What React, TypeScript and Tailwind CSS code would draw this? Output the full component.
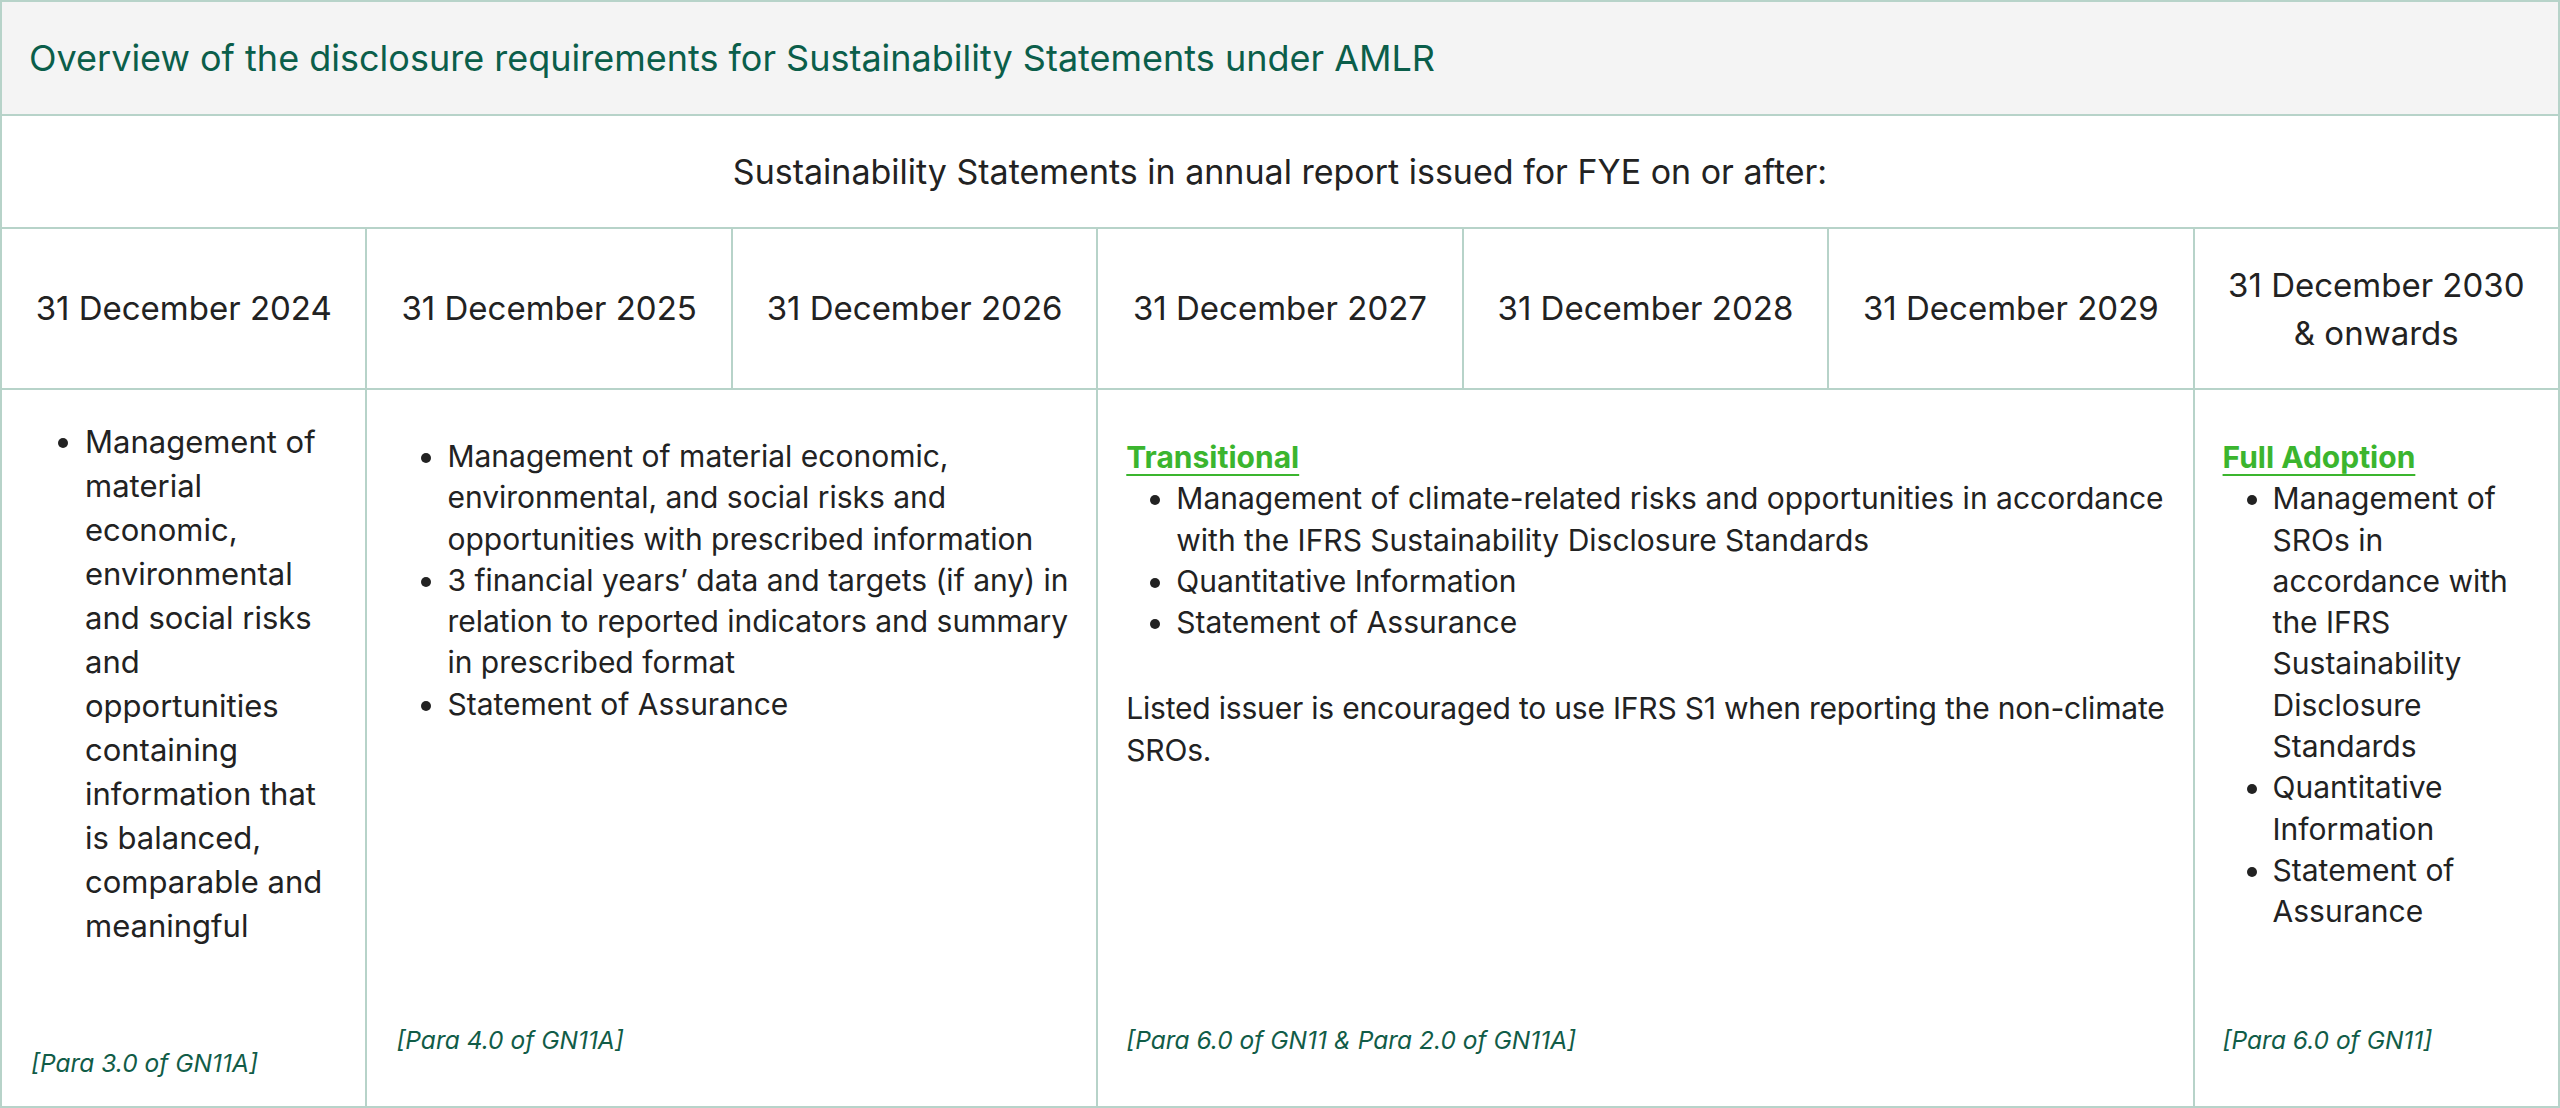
import React from "react";

const font = { fontFamily: "Inter, 'Noto Sans', sans-serif" };

function Bullets({ items, cls }: { items: string[]; cls: string }) {
  return (
    <ul className={`list-disc ${cls}`}>
      {items.map((t) => (
        <li key={t}>{t}</li>
      ))}
    </ul>
  );
}

const Ref = ({ children }: { children: React.ReactNode }) => (
  <div className="mt-auto text-[24.5px] italic text-[#115c47] leading-[32px]">{children}</div>
);

export default function App() {
  const dates = [
    "31 December 2024",
    "31 December 2025",
    "31 December 2026",
    "31 December 2027",
    "31 December 2028",
    "31 December 2029",
  ];
  return (
    <div className="w-[2560px] h-[1108px] bg-white text-[#222222]" style={font}>
      <div className="grid grid-cols-7 border-l-2 border-t-2 border-[#b7d3c9]">
        <div className="col-span-7 h-[114px] bg-[#f4f4f4] border-r-2 border-b-2 border-[#b7d3c9] flex items-center pl-[27px] text-[36px] text-[#0b5e4a]">
          Overview of the disclosure requirements for Sustainability Statements under AMLR
        </div>
        <div className="col-span-7 h-[113px] border-r-2 border-b-2 border-[#b7d3c9] flex items-center justify-center text-[34px]">
          Sustainability Statements in annual report issued for FYE on or after:
        </div>
        {dates.map((d) => (
          <div
            key={d}
            className="h-[161px] border-r-2 border-b-2 border-[#b7d3c9] flex items-center justify-center text-[33px]"
          >
            {d}
          </div>
        ))}
        <div className="h-[161px] border-r-2 border-b-2 border-[#b7d3c9] flex items-center justify-center text-center text-[33px] leading-[48px]">
          31 December 2030
          <br />& onwards
        </div>

        {/* body */}
        <div className="h-[718px] border-r-2 border-b-2 border-[#b7d3c9] flex flex-col pl-[29px] pr-[24px] pt-[30px] pb-[27px]">
          <Bullets
            cls="pl-[54px] text-[31px] leading-[44px]"
            items={[
              "Management of material economic, environmental and social risks and opportunities containing information that is balanced, comparable and meaningful",
            ]}
          />
          <Ref>[Para 3.0 of GN11A]</Ref>
        </div>
        <div className="col-span-2 h-[718px] border-r-2 border-b-2 border-[#b7d3c9] flex flex-col pl-[29px] pr-[24px] pt-[46px] pb-[50px]">
          <Bullets
            cls="pl-[51px] text-[30px] leading-[41.3px]"
            items={[
              "Management of material economic, environmental, and social risks and opportunities with prescribed information",
              "3 financial years’ data and targets (if any) in relation to reported indicators and summary in prescribed format",
              "Statement of Assurance",
            ]}
          />
          <Ref>[Para 4.0 of GN11A]</Ref>
        </div>
        <div className="col-span-3 h-[718px] border-r-2 border-b-2 border-[#b7d3c9] flex flex-col pl-[28px] pr-[10px] pt-[47px] pb-[50px] text-[30px] leading-[41.3px]">
          <div className="font-bold text-[#3bb52e] underline underline-offset-[6px] decoration-2">Transitional</div>
          <Bullets
            cls="pl-[50px]"
            items={[
              "Management of climate-related risks and opportunities in accordance with the IFRS Sustainability Disclosure Standards",
              "Quantitative Information",
              "Statement of Assurance",
            ]}
          />
          <p className="mt-[45px] tracking-[-0.2px]">
            Listed issuer is encouraged to use IFRS S1 when reporting the non-climate SROs.
          </p>
          <Ref>[Para 6.0 of GN11 &amp; Para 2.0 of GN11A]</Ref>
        </div>
        <div className="h-[718px] border-r-2 border-b-2 border-[#b7d3c9] flex flex-col pl-[28px] pr-[24px] pt-[47px] pb-[50px] text-[30px] leading-[41.3px]">
          <div className="font-bold text-[#3bb52e] underline underline-offset-[6px] decoration-2">Full Adoption</div>
          <Bullets
            cls="pl-[50px]"
            items={[
              "Management of SROs in accordance with the IFRS Sustainability Disclosure Standards",
              "Quantitative Information",
              "Statement of Assurance",
            ]}
          />
          <Ref>[Para 6.0 of GN11]</Ref>
        </div>
      </div>
    </div>
  );
}
